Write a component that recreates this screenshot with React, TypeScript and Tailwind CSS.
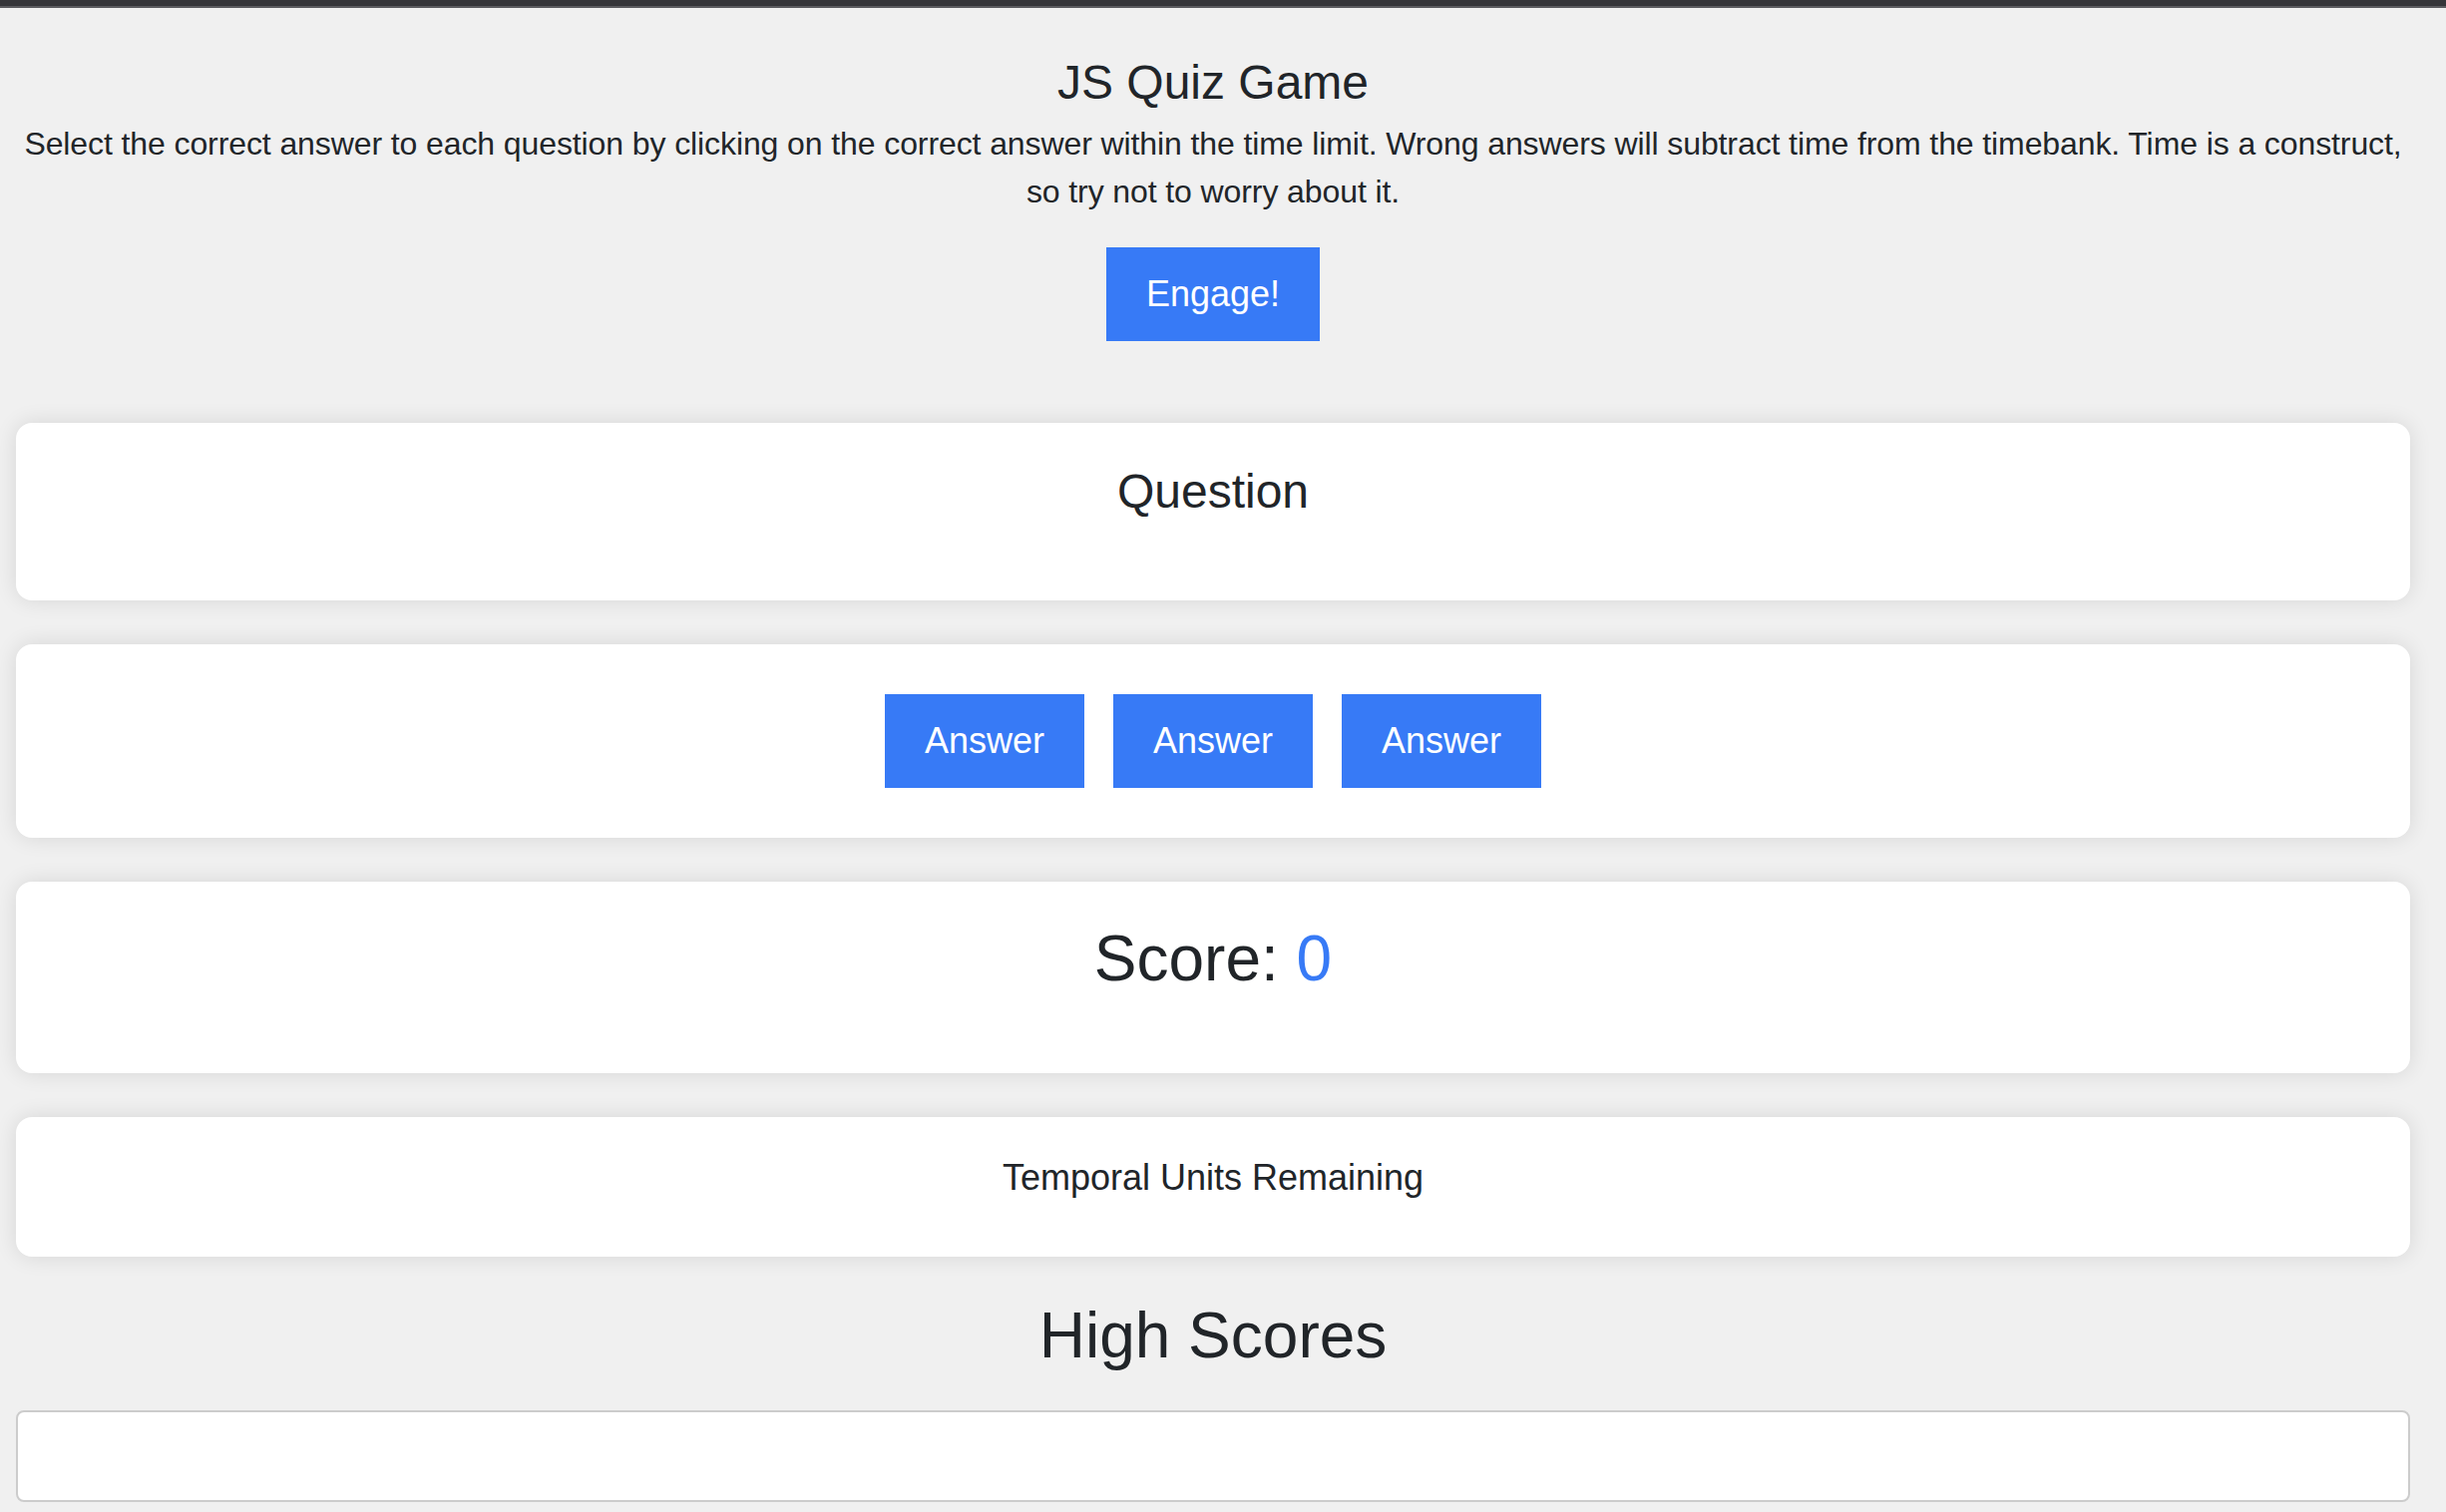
import React, { useState } from 'react';

const Card: React.FC<{ className?: string; children?: React.ReactNode }> = ({ className = '', children }) => (
  <div className={`bg-white rounded-2xl shadow-[0_0_22px_rgba(0,0,0,0.11)] text-center ${className}`}>{children}</div>
);

const App: React.FC = () => {
  const [score] = useState(0);

  return (
    <div className="min-h-screen bg-[#f0f0f0] text-[#212529] font-['Liberation_Sans',Arial,sans-serif]">
      {/* window top edge */}
      <div className="h-[6px] bg-[#353539]" />
      <div className="h-[2px] bg-[#5b5b5f]" />

      <div className="ml-4 w-[2400px] flex flex-col items-center text-center">
        <h1 className="mt-[46px] text-[48px] leading-[58px] font-normal">JS Quiz Game</h1>
        <p className="mt-[8px] text-[32px] leading-[48px] tracking-[-0.1px]">
          Select the correct answer to each question by clicking on the correct answer within the time limit. Wrong answers will subtract time from the timebank. Time is a construct, so try not to worry about it.
        </p>
        <button className="mt-8 bg-[#377af6] text-white text-[36px] leading-[54px] px-10 py-5">Engage!</button>
      </div>

      <div className="ml-4 w-[2400px] mt-[82px] flex flex-col gap-[44px]">
        <Card className="h-[178px] pt-[40px]">
          <h2 className="text-[48px] leading-[58px] font-normal">Question</h2>
        </Card>

        <Card className="h-[194px] pt-[50px] flex justify-center items-start gap-[29px]">
          <button className="w-[200px] h-[94px] bg-[#377af6] text-white text-[36px] leading-[54px]">Answer</button>
          <button className="w-[200px] h-[94px] bg-[#377af6] text-white text-[36px] leading-[54px]">Answer</button>
          <button className="w-[200px] h-[94px] bg-[#377af6] text-white text-[36px] leading-[54px]">Answer</button>
        </Card>

        <Card className="h-[192px] pt-[39px]">
          <h2 className="text-[64px] leading-[77px] font-normal">
            Score: <span className="text-[#377af6]">{score}</span>
          </h2>
        </Card>

        <Card className="h-[140px] pt-[34px]">
          <p className="text-[36px] leading-[54px]">Temporal Units Remaining</p>
        </Card>
      </div>

      <div className="ml-4 w-[2400px] flex flex-col">
        <h2 className="mt-[41px] text-[64px] leading-[77px] font-normal text-center">High Scores</h2>
        <ul className="mt-[36px] h-[92px] bg-white border-2 border-[#cccccc] rounded-lg" />
      </div>
    </div>
  );
};

export default App;
